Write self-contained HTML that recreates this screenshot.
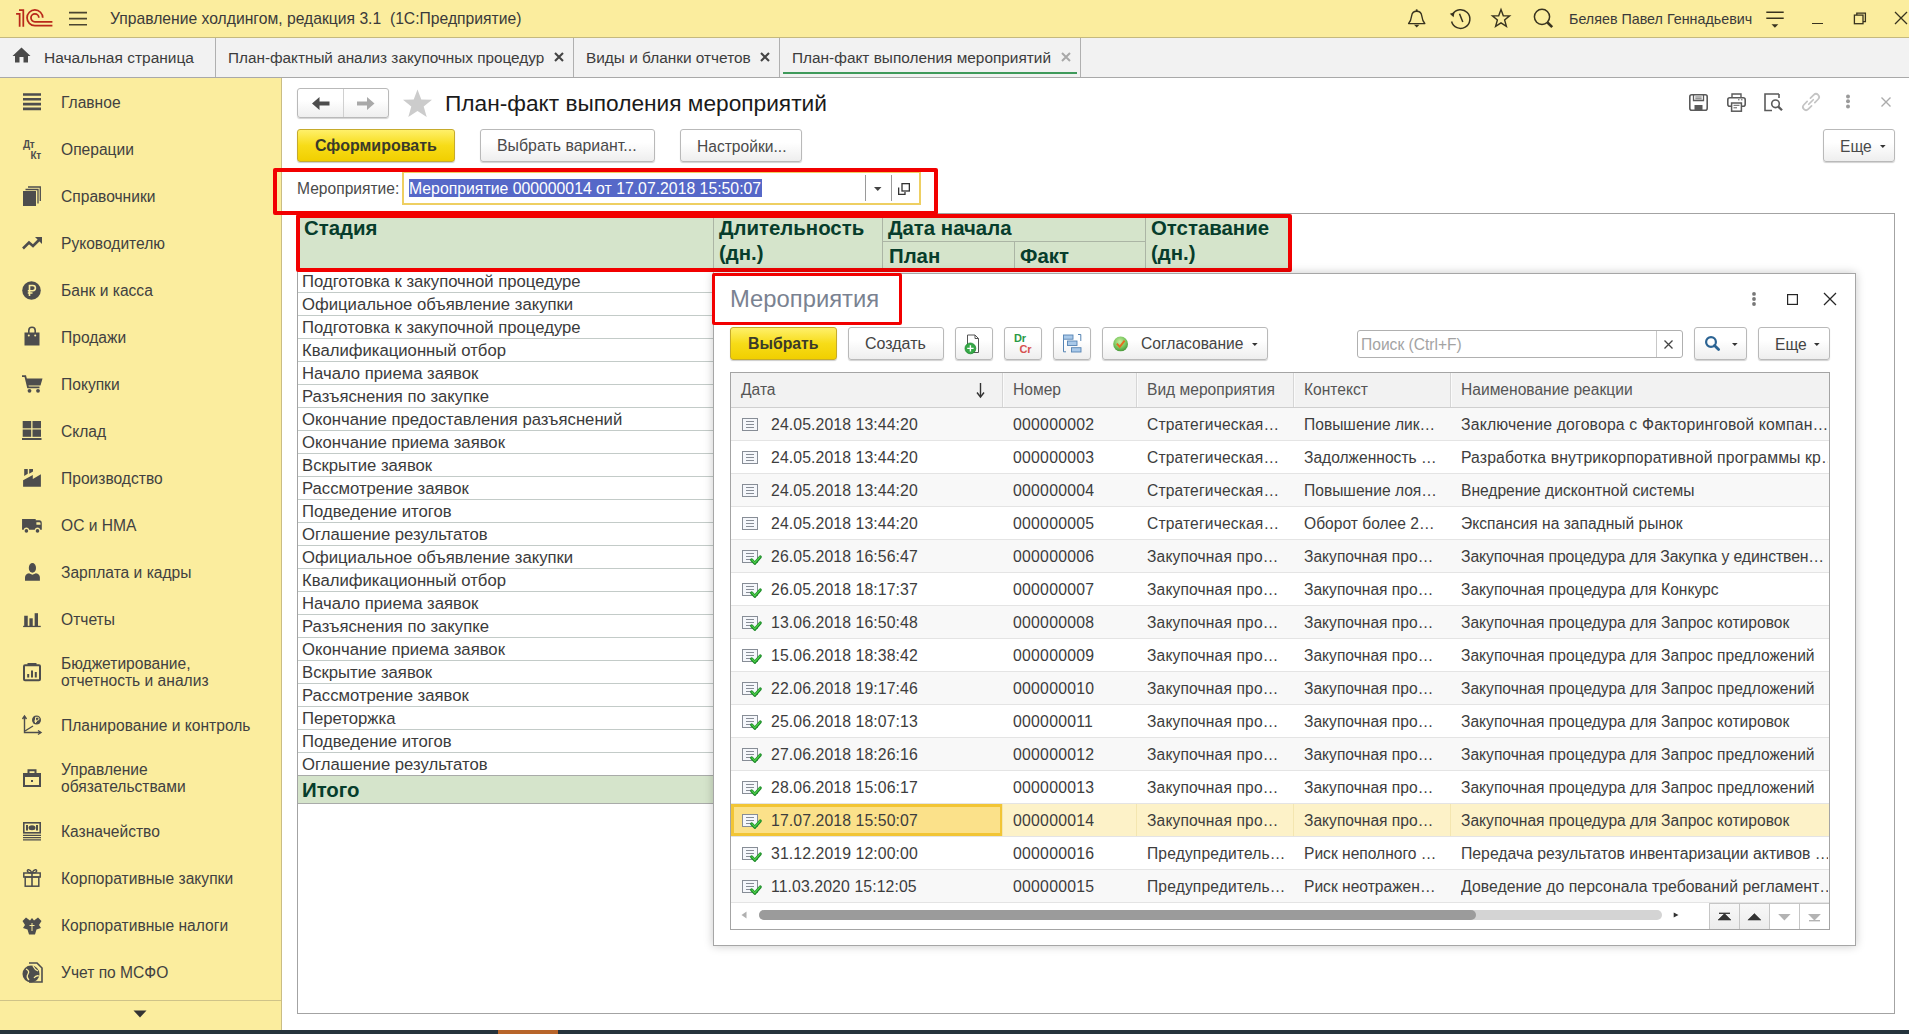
<!DOCTYPE html>
<html><head><meta charset="utf-8"><style>
*{box-sizing:border-box;margin:0;padding:0}
html,body{width:1909px;height:1034px;overflow:hidden;background:#fff;font-family:"Liberation Sans",sans-serif;color:#404040;font-size:15.6px}
.a{position:absolute}
.t{position:absolute;white-space:nowrap;line-height:20px;height:20px}
.sep{position:absolute;width:1px;background:#b4b4b4}
.btn{position:absolute;border:1px solid #b9b9b9;border-radius:3px;background:linear-gradient(#ffffff,#ffffff 40%,#eeeeee);box-shadow:0 1px 1px rgba(0,0,0,.18)}
.ybtn{position:absolute;border:1px solid #c6ab2c;border-radius:3px;background:linear-gradient(#fff06a,#f7dc18 50%,#f1cf00);box-shadow:0 1px 1px rgba(0,0,0,.2)}
svg{position:absolute;overflow:visible}
</style></head><body>
<div class="a" style="left:0px;top:0px;width:1909px;height:38px;background:#fbed9e;border-bottom:1px solid #c5b97e"></div>
<div class="a" style="left:0px;top:38px;width:1909px;height:40px;background:#f2f2f2;border-bottom:1px solid #a9a9a9"></div>
<div class="a" style="left:0px;top:78px;width:282px;height:952px;background:#fbed9e;border-right:1px solid #cabd84"></div>
<div class="a" style="left:0px;top:1000px;width:281px;height:1px;background:#cfc388"></div>
<div class="a" style="left:0px;top:1030px;width:1909px;height:4px;background:#25333c"></div>
<div class="a" style="left:498px;top:1030px;width:60px;height:4px;background:#b8652a"></div>
<svg style="left:12px;top:6px" width="44" height="24" viewBox="0 0 44 24">
<g fill="none" stroke="#b9281a" stroke-width="1.75">
<path d="M4.1 7.9 H7.65 V20.65"/>
<path d="M7 4.05 H11.3 V20.65"/>
<path d="M30.75 11.8 A7.85 7.85 0 1 0 22.9 19.65 H40.4"/>
<path d="M26.85 11.8 A3.95 3.95 0 1 0 22.9 15.75 H40.4"/>
</g>
</svg>
<svg style="left:69px;top:11px" width="19" height="15" viewBox="0 0 19 15"><path d="M0 1.6H18M0 7.6H18M0 13.8H18" stroke="#4a4530" stroke-width="1.6"/></svg>
<div class="t" style="left:110px;top:8.56px;font-size:15.7px;line-height:20px;height:20px;color:#3a3a3a;">Управление холдингом, редакция 3.1&nbsp; (1С:Предприятие)</div>
<svg style="left:1406px;top:7px" width="22" height="22" viewBox="0 0 22 22"><path d="M2.6 16.6 C4.8 14.3 5.2 12 5.6 9 C6 6 7.5 4.3 10.7 4.3 C13.9 4.3 15.4 6 15.8 9 C16.2 12 16.6 14.3 18.8 16.6 Z" fill="none" stroke="#38331f" stroke-width="1.4" stroke-linejoin="round"/><path d="M8 17.8 H13.4 L10.7 20.6Z" fill="#38331f"/><circle cx="10.7" cy="3.3" r="1.1" fill="#38331f"/></svg>
<svg style="left:1448px;top:7px" width="23" height="23" viewBox="0 0 23 23"><path d="M4.6 7.3 A9.3 9.3 0 1 1 3.6 14.5" fill="none" stroke="#38331f" stroke-width="1.5"/><path d="M1.8 6.8 L6.5 5.2 L5.6 10.2 Z" fill="#38331f"/><path d="M11.5 6.8 L14.8 15" fill="none" stroke="#38331f" stroke-width="1.5"/></svg>
<svg style="left:1491px;top:8px" width="20" height="20" viewBox="0 0 20 20"><path d="M10 1.5 L12.3 7.7 L18.6 7.9 L13.6 12 L15.4 18.4 L10 14.8 L4.6 18.4 L6.4 12 L1.4 7.9 L7.7 7.7 Z" fill="none" stroke="#38331f" stroke-width="1.4" stroke-linejoin="miter"/></svg>
<svg style="left:1533px;top:8px" width="21" height="21" viewBox="0 0 21 21"><circle cx="9" cy="8.8" r="7.6" fill="none" stroke="#38331f" stroke-width="1.5"/><path d="M14.5 14.5 L19.2 19.2" stroke="#38331f" stroke-width="2.6"/></svg>
<div class="t" style="left:1569px;top:9.05px;font-size:14.3px;line-height:20px;height:20px;color:#3a3a3a;">Беляев Павел Геннадьевич</div>
<svg style="left:1765px;top:10px" width="20" height="20" viewBox="0 0 20 20"><path d="M1.3 2.3H18.7M1.3 8.3H18.7" stroke="#38331f" stroke-width="1.5"/><path d="M6.5 14.2H13.3L9.9 17.8Z" fill="#38331f"/></svg>
<div class="a" style="left:1812px;top:22.6px;width:11px;height:1.5px;background:#38331f"></div>
<svg style="left:1853px;top:12px" width="14" height="13" viewBox="0 0 14 13"><rect x="1.4" y="3.1" width="8.6" height="8.6" fill="none" stroke="#38331f" stroke-width="1.3"/><path d="M3.8 3.1V1.2H12.4V9.6H10" fill="none" stroke="#38331f" stroke-width="1.3"/></svg>
<svg style="left:1894px;top:11px" width="14" height="14" viewBox="0 0 14 14"><path d="M1 1L13 13M13 1L1 13" stroke="#38331f" stroke-width="1.3"/></svg>
<svg style="left:12px;top:47px" width="19" height="16" viewBox="0 0 19 16"><path d="M9.5 0.5 L18.5 9 H16 V15.5 H11.5 V10 H7.5 V15.5 H3 V9 H0.5 Z" fill="#4a4a4a"/></svg>
<div class="t" style="left:44px;top:47.63px;font-size:15.5px;line-height:20px;height:20px;color:#3c3c3c;">Начальная страница</div>
<div class="a" style="left:215px;top:38px;width:1px;height:39px;background:#b0b0b0"></div>
<div class="t" style="left:228px;top:47.7px;font-size:15.3px;line-height:20px;height:20px;color:#3c3c3c;">План-фактный анализ закупочных процедур</div>
<svg style="left:554px;top:52px" width="10" height="10" viewBox="0 0 10 10"><path d="M1 1L9 9M9 1L1 9" stroke="#444" stroke-width="2.1"/></svg>
<div class="a" style="left:573px;top:38px;width:1px;height:39px;background:#b0b0b0"></div>
<div class="t" style="left:586px;top:47.66px;font-size:15.4px;line-height:20px;height:20px;color:#3c3c3c;">Виды и бланки отчетов</div>
<svg style="left:760px;top:52px" width="10" height="10" viewBox="0 0 10 10"><path d="M1 1L9 9M9 1L1 9" stroke="#444" stroke-width="2.1"/></svg>
<div class="a" style="left:779px;top:38px;width:1px;height:39px;background:#b0b0b0"></div>
<div class="t" style="left:792px;top:47.66px;font-size:15.4px;line-height:20px;height:20px;color:#3c3c3c;">План-факт выполения мероприятий</div>
<svg style="left:1061px;top:52px" width="10" height="10" viewBox="0 0 10 10"><path d="M1 1L9 9M9 1L1 9" stroke="#a8a8a8" stroke-width="2"/></svg>
<div class="a" style="left:1080px;top:38px;width:1px;height:39px;background:#b0b0b0"></div>
<div class="a" style="left:783px;top:72px;width:294px;height:2px;background:#3f9a5b"></div>
<div class="t" style="left:61px;top:92.59px;font-size:15.6px;line-height:20px;height:20px;color:#414141;">Главное</div>
<div class="t" style="left:61px;top:139.59px;font-size:15.6px;line-height:20px;height:20px;color:#414141;">Операции</div>
<div class="t" style="left:61px;top:186.59px;font-size:15.6px;line-height:20px;height:20px;color:#414141;">Справочники</div>
<div class="t" style="left:61px;top:233.59px;font-size:15.6px;line-height:20px;height:20px;color:#414141;">Руководителю</div>
<div class="t" style="left:61px;top:280.59px;font-size:15.6px;line-height:20px;height:20px;color:#414141;">Банк и касса</div>
<div class="t" style="left:61px;top:327.59px;font-size:15.6px;line-height:20px;height:20px;color:#414141;">Продажи</div>
<div class="t" style="left:61px;top:374.59px;font-size:15.6px;line-height:20px;height:20px;color:#414141;">Покупки</div>
<div class="t" style="left:61px;top:421.59px;font-size:15.6px;line-height:20px;height:20px;color:#414141;">Склад</div>
<div class="t" style="left:61px;top:468.59px;font-size:15.6px;line-height:20px;height:20px;color:#414141;">Производство</div>
<div class="t" style="left:61px;top:515.59px;font-size:15.6px;line-height:20px;height:20px;color:#414141;">ОС и НМА</div>
<div class="t" style="left:61px;top:562.59px;font-size:15.6px;line-height:20px;height:20px;color:#414141;">Зарплата и кадры</div>
<div class="t" style="left:61px;top:609.59px;font-size:15.6px;line-height:20px;height:20px;color:#414141;">Отчеты</div>
<div class="t" style="left:61px;top:653.59px;font-size:15.6px;line-height:20px;height:20px;color:#414141;">Бюджетирование,</div>
<div class="t" style="left:61px;top:670.59px;font-size:15.6px;line-height:20px;height:20px;color:#414141;">отчетность и анализ</div>
<div class="t" style="left:61px;top:715.59px;font-size:15.6px;line-height:20px;height:20px;color:#414141;">Планирование и контроль</div>
<div class="t" style="left:61px;top:759.59px;font-size:15.6px;line-height:20px;height:20px;color:#414141;">Управление</div>
<div class="t" style="left:61px;top:776.59px;font-size:15.6px;line-height:20px;height:20px;color:#414141;">обязательствами</div>
<div class="t" style="left:61px;top:821.59px;font-size:15.6px;line-height:20px;height:20px;color:#414141;">Казначейство</div>
<div class="t" style="left:61px;top:868.59px;font-size:15.6px;line-height:20px;height:20px;color:#414141;">Корпоративные закупки</div>
<div class="t" style="left:61px;top:915.59px;font-size:15.6px;line-height:20px;height:20px;color:#414141;">Корпоративные налоги</div>
<div class="t" style="left:61px;top:962.59px;font-size:15.6px;line-height:20px;height:20px;color:#414141;">Учет по МСФО</div>
<svg style="left:133px;top:1010px" width="14" height="8" viewBox="0 0 14 8"><path d="M0.5 0.5H13.5L7 7.5Z" fill="#333"/></svg>
<svg style="left:23px;top:93px" width="18" height="18" viewBox="0 0 18 18"><path d="M0 1.5H18M0 6.3H18M0 11.1H18M0 15.9H18" stroke="#4d4d4d" stroke-width="2.6"/></svg>
<div class="a" style="left:23px;top:140px;font-size:10px;font-weight:700;color:#4d4d4d;line-height:10px;letter-spacing:-0.3px">Дт</div>
<div class="a" style="left:30.5px;top:150.5px;font-size:10px;font-weight:700;color:#4d4d4d;line-height:10px;letter-spacing:-0.3px">Кт</div>
<svg style="left:23px;top:186px" width="18" height="20" viewBox="0 0 18 20"><rect x="0" y="5" width="13" height="15" fill="#4d4d4d"/><path d="M2.5 3.5H15V17.5" fill="none" stroke="#4d4d4d" stroke-width="1.3"/><path d="M5 1H17.3V15" fill="none" stroke="#4d4d4d" stroke-width="1.3"/></svg>
<svg style="left:22px;top:236px" width="21" height="14" viewBox="0 0 21 14"><path d="M1 12.5 L7 6.5 L11 10 L18 3" fill="none" stroke="#4d4d4d" stroke-width="2.6" stroke-linejoin="miter"/><path d="M13 1 H20 V8 Z" fill="#4d4d4d"/></svg>
<svg style="left:22px;top:281px" width="19" height="19" viewBox="0 0 19 19"><circle cx="9.5" cy="9.5" r="9.3" fill="#4d4d4d"/><path d="M7.5 15V4.5H10.8A2.6 2.6 0 0 1 10.8 9.7H5.8M5.8 12H10.5" fill="none" stroke="#fbed9e" stroke-width="1.6"/></svg>
<svg style="left:24px;top:327px" width="16" height="19" viewBox="0 0 16 19"><path d="M0.5 5.5H15.5V18.5H0.5Z" fill="#4d4d4d"/><path d="M4.8 8V3.5A3.2 3.2 0 0 1 11.2 3.5V8" fill="none" stroke="#4d4d4d" stroke-width="1.6"/><circle cx="4.8" cy="8.5" r="1" fill="#fbed9e"/><circle cx="11.2" cy="8.5" r="1" fill="#fbed9e"/></svg>
<svg style="left:22px;top:375px" width="21" height="18" viewBox="0 0 21 18"><path d="M0 1.2H3.3L6 12.3H17.5" fill="none" stroke="#4d4d4d" stroke-width="1.8"/><path d="M4.2 3.5H20.5L18.5 10.5H5.8Z" fill="#4d4d4d"/><circle cx="7.5" cy="15.8" r="1.9" fill="#4d4d4d"/><circle cx="16" cy="15.8" r="1.9" fill="#4d4d4d"/></svg>
<svg style="left:22px;top:421px" width="20" height="19" viewBox="0 0 20 19"><rect x="0.7" y="0" width="8.5" height="7.3" fill="#4d4d4d"/><rect x="10.5" y="0" width="8.5" height="7.3" fill="#4d4d4d"/><rect x="0.7" y="8.5" width="8.5" height="7.3" fill="#4d4d4d"/><rect x="10.5" y="8.5" width="8.5" height="7.3" fill="#4d4d4d"/><rect x="0" y="17" width="19.5" height="2" fill="#4d4d4d"/></svg>
<svg style="left:18px;top:464px" width="28" height="28" viewBox="0 0 28 28"><path d="M5.1 22.7 V16.2 L14.8 11 V15 L22.9 10.3 V22.7 Z" fill="#4d4d4d"/><path d="M6.2 5 H9.75 V9.8 L6.2 11.9 Z" fill="#4d4d4d"/><path d="M11.2 5 H15 V7.6 L11.2 9.7 Z" fill="#4d4d4d"/></svg>
<svg style="left:18px;top:511px" width="28" height="28" viewBox="0 0 28 28"><path d="M4.06 8.1 H17.7 V9.3 H21.3 Q23.8 9.3 23.8 12.5 V18.7 H22.3 A2.9 2.9 0 0 0 16.7 18.7 H11.2 A2.9 2.9 0 0 0 5.6 18.7 H4.06 Z" fill="#4d4d4d"/><path d="M18.4 11.2 H21.2 Q22.5 11.2 22.5 12.5 V13.8 H18.4 Z" fill="#fbed9e"/><circle cx="8.4" cy="19.9" r="1.8" fill="#4d4d4d"/><circle cx="19.5" cy="19.9" r="1.8" fill="#4d4d4d"/></svg>
<svg style="left:18px;top:558px" width="28" height="28" viewBox="0 0 28 28"><ellipse cx="14.4" cy="9.9" rx="3.6" ry="4.9" fill="#4d4d4d"/><path d="M7 22.75 V19.5 Q7 16 11 15.3 L14.4 16.8 L17.9 15.3 Q21.9 16 21.9 19.5 V22.75 Z" fill="#4d4d4d"/></svg>
<svg style="left:18px;top:606px" width="28" height="28" viewBox="0 0 28 28"><rect x="6.2" y="9.75" width="3.55" height="10.6" fill="#4d4d4d"/><rect x="11.4" y="12.3" width="3.35" height="8" fill="#4d4d4d"/><rect x="16.65" y="7.2" width="3.35" height="13.1" fill="#4d4d4d"/><rect x="5.1" y="19.8" width="17.65" height="1.3" fill="#4d4d4d"/></svg>
<svg style="left:23px;top:663px" width="18" height="18" viewBox="0 0 18 18"><rect x="1" y="2.2" width="16" height="15" rx="1" fill="none" stroke="#4d4d4d" stroke-width="2"/><rect x="4.5" y="0" width="9" height="3" fill="#4d4d4d"/><rect x="4.2" y="11" width="2" height="3.5" fill="#4d4d4d"/><rect x="8" y="7.5" width="2" height="7" fill="#4d4d4d"/><rect x="11.8" y="9" width="2" height="5.5" fill="#4d4d4d"/></svg>
<svg style="left:22px;top:715px" width="20" height="20" viewBox="0 0 20 20"><path d="M2.5 1.5V17.5H18.5" fill="none" stroke="#4d4d4d" stroke-width="1.4"/><path d="M0.5 4L2.5 1L4.5 4M16 15.5L19 17.5L16 19.5" fill="none" stroke="#4d4d4d" stroke-width="1.4"/><path d="M3 16L11 11" stroke="#4d4d4d" stroke-width="1.4"/><circle cx="14.5" cy="5" r="4.5" fill="#4d4d4d"/><path d="M13.5 8V2.3H15.5A1.5 1.5 0 0 1 15.5 5.3H12.5M12.5 6.6H15" fill="none" stroke="#fbed9e" stroke-width="1"/></svg>
<svg style="left:23px;top:769px" width="18" height="18" viewBox="0 0 18 18"><rect x="1" y="5" width="16" height="12" fill="none" stroke="#4d4d4d" stroke-width="2"/><path d="M5.5 5V1.3H12.5V5" fill="none" stroke="#4d4d4d" stroke-width="2"/><rect x="1" y="5" width="16" height="3" fill="#4d4d4d"/><rect x="8" y="11" width="2" height="2" fill="#4d4d4d"/></svg>
<svg style="left:23px;top:822px" width="18" height="18" viewBox="0 0 18 18"><rect x="0.8" y="0.8" width="16.4" height="10" fill="none" stroke="#4d4d4d" stroke-width="1.6"/><ellipse cx="9" cy="5.8" rx="3.5" ry="2.5" fill="#4d4d4d"/><rect x="3" y="3" width="2" height="5.5" fill="#4d4d4d"/><rect x="13" y="3" width="2" height="5.5" fill="#4d4d4d"/><path d="M0 13.3H18M0 15.6H18M0 17.8H18" stroke="#4d4d4d" stroke-width="1.2"/></svg>
<svg style="left:23px;top:868px" width="18" height="19" viewBox="0 0 18 19"><rect x="0.8" y="5" width="16.4" height="4" fill="none" stroke="#4d4d4d" stroke-width="1.5"/><rect x="2.2" y="9" width="13.6" height="9.2" fill="none" stroke="#4d4d4d" stroke-width="1.5"/><path d="M9 5V18.5" stroke="#4d4d4d" stroke-width="1.6"/><path d="M9 5C7 1 3.5 1 4.5 3.5 C5 5 8 5 9 5 C10 5 13 5 13.5 3.5 C14.5 1 11 1 9 5" fill="none" stroke="#4d4d4d" stroke-width="1.4"/></svg>
<svg style="left:22px;top:916px" width="20" height="19" viewBox="0 0 20 19"><path d="M10 2 L12 4.5 L16 1.5 L19.5 5 L17 9 L19 12 L14.5 13.5 L13 18.5 H7 L5.5 13.5 L1 12 L3 9 L0.5 5 L4 1.5 L8 4.5 Z" fill="#4d4d4d"/><path d="M10 7V15M7.5 9.5H12.5" stroke="#fbed9e" stroke-width="1"/></svg>
<svg style="left:22px;top:962px" width="21" height="21" viewBox="0 0 21 21"><path d="M7 1H15L20 6V20H7" fill="none" stroke="#4d4d4d" stroke-width="1.6"/><circle cx="9" cy="12" r="8.5" fill="#4d4d4d"/><path d="M4 7 Q8 9 6 12 Q4 15 7 18 M11 4 Q13 8 16 9 M12 16 Q14 13 17 14" fill="none" stroke="#fbed9e" stroke-width="1.3"/></svg>
<div class="btn" style="left:297px;top:88px;width:92px;height:30px"></div>
<div class="a" style="left:343px;top:89px;width:1px;height:28px;background:#d0d0d0"></div>
<svg style="left:312px;top:97px" width="18" height="13" viewBox="0 0 18 13"><path d="M0 6.5 L7.5 0 V4.5 H17.5 V8.5 H7.5 V13 Z" fill="#4d4d4d"/></svg>
<svg style="left:357px;top:97px" width="18" height="13" viewBox="0 0 18 13"><path d="M17.5 6.5 L10 0 V4.5 H0 V8.5 H10 V13 Z" fill="#a9a9a9"/></svg>
<svg style="left:402px;top:89px" width="31" height="29" viewBox="0 0 31 29"><path d="M15.5 0.5 L19.3 10.5 L30 10.8 L21.7 17.5 L24.7 28 L15.5 22 L6.3 28 L9.3 17.5 L1 10.8 L11.7 10.5 Z" fill="#cccccc"/></svg>
<div class="t" style="left:445px;top:88.13px;font-size:22.7px;line-height:30px;height:30px;color:#1a1a1a;">План-факт выполения мероприятий</div>
<svg style="left:1689px;top:94px" width="19" height="17" viewBox="0 0 19 17"><rect x="0.8" y="0.8" width="17.4" height="15.4" rx="2" fill="none" stroke="#5a5a5a" stroke-width="1.6"/><path d="M4.5 1V6.5H14.5V1" fill="none" stroke="#5a5a5a" stroke-width="1.3"/><path d="M6.3 3H12.7M6.3 4.8H12.7" stroke="#5a5a5a" stroke-width="0.9"/><rect x="5.5" y="11" width="8" height="5" fill="#5a5a5a"/></svg>
<svg style="left:1727px;top:93px" width="19" height="19" viewBox="0 0 19 19"><path d="M5 4.5V1H14V4.5" fill="none" stroke="#5a5a5a" stroke-width="1.4"/><rect x="0.8" y="4.7" width="17.4" height="8.6" rx="2" fill="none" stroke="#5a5a5a" stroke-width="1.6"/><rect x="4.6" y="10" width="9.8" height="8.2" fill="#fff" stroke="#5a5a5a" stroke-width="1.5"/><path d="M6.5 12.3H12.5M6.5 14.8H10" stroke="#5a5a5a" stroke-width="1"/><path d="M11 6.8H12.5M14 6.8H15.5" stroke="#5a5a5a" stroke-width="1"/></svg>
<svg style="left:1764px;top:93px" width="19" height="19" viewBox="0 0 19 19"><path d="M15 1H1V17.5H8" fill="none" stroke="#5a5a5a" stroke-width="1.6"/><path d="M15 1V5" stroke="#5a5a5a" stroke-width="1.6"/><circle cx="11.5" cy="10.8" r="3.8" fill="none" stroke="#5a5a5a" stroke-width="1.6"/><path d="M14.3 13.6L18 17.3" stroke="#5a5a5a" stroke-width="2.3"/></svg>
<svg style="left:1798px;top:89px" width="26" height="26" viewBox="0 0 26 26"><g transform="rotate(-45 13 13)" fill="none" stroke="#c4c4c4" stroke-width="1.7" stroke-linecap="round"><path d="M10.7 9.9 H6 A3.1 3.1 0 0 0 6 16.1 H10.7"/><path d="M15.3 9.9 H20 A3.1 3.1 0 0 1 20 16.1 H15.3"/><path d="M9.8 13 H16.2"/></g></svg>
<svg style="left:1845px;top:94px" width="6" height="17" viewBox="0 0 6 17"><circle cx="3" cy="2.5" r="2" fill="#9a9a9a"/><circle cx="3" cy="7.3" r="2" fill="#9a9a9a"/><circle cx="3" cy="12.4" r="2" fill="#9a9a9a"/></svg>
<svg style="left:1881px;top:97px" width="10" height="10" viewBox="0 0 10 10"><path d="M0.5 0.5L9.5 9.5M9.5 0.5L0.5 9.5" stroke="#ababab" stroke-width="1.4"/></svg>
<div class="ybtn" style="left:297px;top:129px;width:158px;height:33px"></div>
<div class="t" style="left:315px;top:136.46px;font-size:16px;line-height:20px;height:20px;color:#3a3a2a;font-weight:700;">Сформировать</div>
<div class="btn" style="left:480px;top:129px;width:175px;height:33px"></div>
<div class="t" style="left:497px;top:136.49px;font-size:15.9px;line-height:20px;height:20px;color:#4a4a4a;">Выбрать вариант...</div>
<div class="btn" style="left:680px;top:129px;width:122px;height:33px"></div>
<div class="t" style="left:697px;top:136.59px;font-size:15.6px;line-height:20px;height:20px;color:#4a4a4a;">Настройки...</div>
<div class="btn" style="left:1823px;top:129px;width:72px;height:33px"></div>
<div class="t" style="left:1840px;top:136.59px;font-size:15.6px;line-height:20px;height:20px;color:#4a4a4a;">Еще</div>
<svg style="left:1880px;top:145px" width="6" height="3" viewBox="0 0 6 3"><path d="M0 0H5.6L2.8 3Z" fill="#333"/></svg>
<div class="t" style="left:297px;top:178.59px;font-size:15.6px;line-height:20px;height:20px;color:#4a4a4a;">Мероприятие:</div>
<div class="a" style="left:402px;top:171px;width:519px;height:34px;border:2px solid #eecf62;background:#fff"></div>
<div class="a" style="left:409px;top:179px;width:353px;height:18px;background:#5668c8"></div>
<div class="t" style="left:409px;top:178.53px;font-size:15.8px;line-height:20px;height:20px;color:#ffffff;">Мероприятие 000000014 от 17.07.2018 15:50:07</div>
<div class="a" style="left:865px;top:175px;width:1px;height:26px;background:#9a9a9a"></div>
<div class="a" style="left:891px;top:175px;width:1px;height:26px;background:#9a9a9a"></div>
<svg style="left:874px;top:187px" width="8" height="4" viewBox="0 0 8 4"><path d="M0 0H7.5L3.75 4Z" fill="#444"/></svg>
<svg style="left:898px;top:183px" width="12" height="12" viewBox="0 0 12 12"><path d="M0.65 4.5V11.35H7V9" fill="none" stroke="#333" stroke-width="1.3"/><rect x="4" y="0.65" width="7.35" height="7.35" fill="none" stroke="#333" stroke-width="1.3"/></svg>
<div class="a" style="left:297px;top:213px;width:1598px;height:801px;border:1px solid #a3a3a3"></div>
<div class="a" style="left:298px;top:214px;width:990px;height:55px;background:#d5e4cb"></div>
<div class="a" style="left:713px;top:214px;width:1px;height:55px;background:#abb5a5"></div>
<div class="a" style="left:882px;top:214px;width:1px;height:55px;background:#abb5a5"></div>
<div class="a" style="left:1145px;top:214px;width:1px;height:55px;background:#abb5a5"></div>
<div class="a" style="left:882px;top:241px;width:263px;height:1px;background:#abb5a5"></div>
<div class="a" style="left:1014px;top:241px;width:1px;height:28px;background:#abb5a5"></div>
<div class="a" style="left:1288px;top:214px;width:1px;height:55px;background:#abb5a5"></div>
<div class="t" style="left:304px;top:215.93px;font-size:20.4px;line-height:24px;height:24px;color:#073d2c;font-weight:700;">Стадия</div>
<div class="t" style="left:719px;top:215.93px;font-size:20.4px;line-height:24px;height:24px;color:#073d2c;font-weight:700;">Длительность</div>
<div class="t" style="left:719px;top:240.93px;font-size:20.4px;line-height:24px;height:24px;color:#073d2c;font-weight:700;">(дн.)</div>
<div class="t" style="left:888px;top:215.93px;font-size:20.4px;line-height:24px;height:24px;color:#073d2c;font-weight:700;">Дата начала</div>
<div class="t" style="left:889px;top:243.93px;font-size:20.4px;line-height:24px;height:24px;color:#073d2c;font-weight:700;">План</div>
<div class="t" style="left:1020px;top:243.93px;font-size:20.4px;line-height:24px;height:24px;color:#073d2c;font-weight:700;">Факт</div>
<div class="t" style="left:1151px;top:215.93px;font-size:20.4px;line-height:24px;height:24px;color:#073d2c;font-weight:700;">Отставание</div>
<div class="t" style="left:1151px;top:240.93px;font-size:20.4px;line-height:24px;height:24px;color:#073d2c;font-weight:700;">(дн.)</div>
<div class="t" style="left:302px;top:272.21px;font-size:16.7px;line-height:20px;height:20px;color:#3b3b3b;">Подготовка к закупочной процедуре</div>
<div class="a" style="left:298px;top:292px;width:420px;height:1px;background:#c3cbc8"></div>
<div class="t" style="left:302px;top:295.21px;font-size:16.7px;line-height:20px;height:20px;color:#3b3b3b;">Официальное объявление закупки</div>
<div class="a" style="left:298px;top:315px;width:420px;height:1px;background:#c3cbc8"></div>
<div class="t" style="left:302px;top:318.21px;font-size:16.7px;line-height:20px;height:20px;color:#3b3b3b;">Подготовка к закупочной процедуре</div>
<div class="a" style="left:298px;top:338px;width:420px;height:1px;background:#c3cbc8"></div>
<div class="t" style="left:302px;top:341.21px;font-size:16.7px;line-height:20px;height:20px;color:#3b3b3b;">Квалификационный отбор</div>
<div class="a" style="left:298px;top:361px;width:420px;height:1px;background:#c3cbc8"></div>
<div class="t" style="left:302px;top:364.21px;font-size:16.7px;line-height:20px;height:20px;color:#3b3b3b;">Начало приема заявок</div>
<div class="a" style="left:298px;top:384px;width:420px;height:1px;background:#c3cbc8"></div>
<div class="t" style="left:302px;top:387.21px;font-size:16.7px;line-height:20px;height:20px;color:#3b3b3b;">Разъяснения по закупке</div>
<div class="a" style="left:298px;top:407px;width:420px;height:1px;background:#c3cbc8"></div>
<div class="t" style="left:302px;top:410.21px;font-size:16.7px;line-height:20px;height:20px;color:#3b3b3b;">Окончание предоставления разъяснений</div>
<div class="a" style="left:298px;top:430px;width:420px;height:1px;background:#c3cbc8"></div>
<div class="t" style="left:302px;top:433.21px;font-size:16.7px;line-height:20px;height:20px;color:#3b3b3b;">Окончание приема заявок</div>
<div class="a" style="left:298px;top:453px;width:420px;height:1px;background:#c3cbc8"></div>
<div class="t" style="left:302px;top:456.21px;font-size:16.7px;line-height:20px;height:20px;color:#3b3b3b;">Вскрытие заявок</div>
<div class="a" style="left:298px;top:476px;width:420px;height:1px;background:#c3cbc8"></div>
<div class="t" style="left:302px;top:479.21px;font-size:16.7px;line-height:20px;height:20px;color:#3b3b3b;">Рассмотрение заявок</div>
<div class="a" style="left:298px;top:499px;width:420px;height:1px;background:#c3cbc8"></div>
<div class="t" style="left:302px;top:502.21px;font-size:16.7px;line-height:20px;height:20px;color:#3b3b3b;">Подведение итогов</div>
<div class="a" style="left:298px;top:522px;width:420px;height:1px;background:#c3cbc8"></div>
<div class="t" style="left:302px;top:525.21px;font-size:16.7px;line-height:20px;height:20px;color:#3b3b3b;">Оглашение результатов</div>
<div class="a" style="left:298px;top:545px;width:420px;height:1px;background:#c3cbc8"></div>
<div class="t" style="left:302px;top:548.21px;font-size:16.7px;line-height:20px;height:20px;color:#3b3b3b;">Официальное объявление закупки</div>
<div class="a" style="left:298px;top:568px;width:420px;height:1px;background:#c3cbc8"></div>
<div class="t" style="left:302px;top:571.21px;font-size:16.7px;line-height:20px;height:20px;color:#3b3b3b;">Квалификационный отбор</div>
<div class="a" style="left:298px;top:591px;width:420px;height:1px;background:#c3cbc8"></div>
<div class="t" style="left:302px;top:594.21px;font-size:16.7px;line-height:20px;height:20px;color:#3b3b3b;">Начало приема заявок</div>
<div class="a" style="left:298px;top:614px;width:420px;height:1px;background:#c3cbc8"></div>
<div class="t" style="left:302px;top:617.21px;font-size:16.7px;line-height:20px;height:20px;color:#3b3b3b;">Разъяснения по закупке</div>
<div class="a" style="left:298px;top:637px;width:420px;height:1px;background:#c3cbc8"></div>
<div class="t" style="left:302px;top:640.21px;font-size:16.7px;line-height:20px;height:20px;color:#3b3b3b;">Окончание приема заявок</div>
<div class="a" style="left:298px;top:660px;width:420px;height:1px;background:#c3cbc8"></div>
<div class="t" style="left:302px;top:663.21px;font-size:16.7px;line-height:20px;height:20px;color:#3b3b3b;">Вскрытие заявок</div>
<div class="a" style="left:298px;top:683px;width:420px;height:1px;background:#c3cbc8"></div>
<div class="t" style="left:302px;top:686.21px;font-size:16.7px;line-height:20px;height:20px;color:#3b3b3b;">Рассмотрение заявок</div>
<div class="a" style="left:298px;top:706px;width:420px;height:1px;background:#c3cbc8"></div>
<div class="t" style="left:302px;top:709.21px;font-size:16.7px;line-height:20px;height:20px;color:#3b3b3b;">Переторжка</div>
<div class="a" style="left:298px;top:729px;width:420px;height:1px;background:#c3cbc8"></div>
<div class="t" style="left:302px;top:732.21px;font-size:16.7px;line-height:20px;height:20px;color:#3b3b3b;">Подведение итогов</div>
<div class="a" style="left:298px;top:752px;width:420px;height:1px;background:#c3cbc8"></div>
<div class="t" style="left:302px;top:755.21px;font-size:16.7px;line-height:20px;height:20px;color:#3b3b3b;">Оглашение результатов</div>
<div class="a" style="left:713px;top:269px;width:1px;height:506px;background:#c3cbc8"></div>
<div class="a" style="left:298px;top:775px;width:420px;height:1px;background:#a9aba9"></div>
<div class="a" style="left:298px;top:776px;width:420px;height:27px;background:#d5e4cb"></div>
<div class="a" style="left:298px;top:803px;width:420px;height:1px;background:#a9aba9"></div>
<div class="t" style="left:302px;top:777.93px;font-size:20.4px;line-height:24px;height:24px;color:#073d2c;font-weight:700;">Итого</div>
<div class="a" style="left:273px;top:168px;width:665px;height:47px;border:4px solid #f20000;border-radius:2px"></div>
<div class="a" style="left:296px;top:214px;width:996px;height:57.5px;border:4px solid #f20000;border-radius:2px"></div>
<div class="a" style="left:713px;top:273px;width:1143px;height:673px;background:#fff;border:1px solid #a6a6a6;box-shadow:0 0 9px rgba(0,0,0,.22)"></div>
<div class="a" style="left:712px;top:273px;width:190px;height:52px;border:3.6px solid #f20000;border-radius:2px"></div>
<div class="t" style="left:730px;top:283.75px;font-size:23.8px;line-height:30px;height:30px;color:#7a8291;">Мероприятия</div>
<svg style="left:1751px;top:292px" width="6" height="14" viewBox="0 0 6 14"><circle cx="3" cy="1.9" r="1.9" fill="#777"/><circle cx="3" cy="7" r="1.9" fill="#777"/><circle cx="3" cy="12" r="1.9" fill="#777"/></svg>
<svg style="left:1787px;top:294px" width="11" height="11" viewBox="0 0 11 11"><rect x="0.6" y="0.6" width="9.8" height="9.8" fill="none" stroke="#262626" stroke-width="1.2"/></svg>
<svg style="left:1823px;top:292px" width="14" height="14" viewBox="0 0 14 14"><path d="M1 1L13 13M13 1L1 13" stroke="#262626" stroke-width="1.25"/></svg>
<div class="ybtn" style="left:730px;top:327px;width:107px;height:33px"></div>
<div class="t" style="left:748px;top:333.53px;font-size:15.8px;line-height:20px;height:20px;color:#3a3a2a;font-weight:700;">Выбрать</div>
<div class="btn" style="left:848px;top:327px;width:96px;height:33px"></div>
<div class="t" style="left:865px;top:334.46px;font-size:16px;line-height:20px;height:20px;color:#444;">Создать</div>
<div class="btn" style="left:955px;top:327px;width:38px;height:33px"></div>
<svg style="left:964px;top:333px" width="20" height="22" viewBox="0 0 20 22"><path d="M3.5 2H11L14.5 5.5V19.5H3.5Z" fill="#fff" stroke="#555" stroke-width="1"/><path d="M11 2V5.5H14.5" fill="none" stroke="#555" stroke-width="1"/><circle cx="6.4" cy="15.4" r="5.4" fill="#36a847" stroke="#1e8a30" stroke-width="0.8"/><path d="M6.4 12.2V18.6M3.2 15.4H9.6" stroke="#fff" stroke-width="1.4"/></svg>
<div class="btn" style="left:1004px;top:327px;width:38px;height:33px"></div>
<div class="a" style="left:1014px;top:333px;font-size:11px;font-weight:700;color:#2a9a45;line-height:11px;letter-spacing:-0.2px">Dr</div>
<div class="a" style="left:1019.5px;top:343.5px;font-size:11px;font-weight:700;color:#d65050;line-height:11px;letter-spacing:-0.2px">Cr</div>
<div class="btn" style="left:1053px;top:327px;width:38px;height:33px"></div>
<svg style="left:1062px;top:333px" width="20" height="21" viewBox="0 0 20 21"><rect x="1.5" y="2" width="9.5" height="4.2" fill="#a9c9e9" stroke="#5583b3" stroke-width="0.9"/><rect x="5.5" y="8" width="9.5" height="4.5" fill="#a9c9e9" stroke="#5583b3" stroke-width="0.9"/><rect x="9.5" y="14.7" width="9.5" height="4.3" fill="#a9c9e9" stroke="#5583b3" stroke-width="0.9"/><path d="M1.5 6.2V18.8H4M16 1.5H18.8V8" fill="none" stroke="#5583b3" stroke-width="1"/></svg>
<div class="btn" style="left:1102px;top:327px;width:166px;height:33px"></div>
<svg style="left:1112px;top:335px" width="18" height="18" viewBox="0 0 18 18"><defs><radialGradient id="gc" cx="0.45" cy="0.35" r="0.65"><stop offset="0" stop-color="#c8efa0"/><stop offset="0.6" stop-color="#7cc860"/><stop offset="1" stop-color="#4a9a3a"/></radialGradient></defs><circle cx="8.6" cy="8.9" r="7.4" fill="url(#gc)"/><path d="M4.8 8.6L7.8 11.8L12.6 5.6" fill="none" stroke="#e86a20" stroke-width="1.9"/></svg>
<div class="t" style="left:1141px;top:333.59px;font-size:15.6px;line-height:20px;height:20px;color:#444;">Согласование</div>
<svg style="left:1252px;top:343px" width="6" height="3" viewBox="0 0 6 3"><path d="M0 0H5.6L2.8 3Z" fill="#333"/></svg>
<div class="a" style="left:1357px;top:330px;width:326px;height:28px;border:1px solid #b0b0b0;border-radius:3px;background:#fff"></div>
<div class="a" style="left:1656px;top:331px;width:1px;height:26px;background:#c8c8c8"></div>
<div class="t" style="left:1361px;top:334.59px;font-size:15.6px;line-height:20px;height:20px;color:#a3a3a3;">Поиск (Ctrl+F)</div>
<svg style="left:1664px;top:340px" width="9" height="9" viewBox="0 0 9 9"><path d="M0.5 0.5L8.5 8.5M8.5 0.5L0.5 8.5" stroke="#444" stroke-width="1.3"/></svg>
<div class="btn" style="left:1694px;top:327px;width:53px;height:33px"></div>
<svg style="left:1704px;top:335px" width="18" height="18" viewBox="0 0 18 18"><circle cx="7" cy="7" r="4.9" fill="none" stroke="#2b6393" stroke-width="2.2"/><path d="M10.5 10.5L14.6 14.6" stroke="#2b6393" stroke-width="2.8" stroke-linecap="round"/></svg>
<svg style="left:1732px;top:343px" width="6" height="3" viewBox="0 0 6 3"><path d="M0 0H5.6L2.8 3Z" fill="#333"/></svg>
<div class="btn" style="left:1758px;top:327px;width:72px;height:33px"></div>
<div class="t" style="left:1775px;top:334.59px;font-size:15.6px;line-height:20px;height:20px;color:#444;">Еще</div>
<svg style="left:1814px;top:343px" width="6" height="3" viewBox="0 0 6 3"><path d="M0 0H5.6L2.8 3Z" fill="#333"/></svg>
<div class="a" style="left:730px;top:372px;width:1100px;height:558px;border:1px solid #a4a4a4;background:#fff"></div>
<div class="a" style="left:731px;top:373px;width:1098px;height:34px;background:#f2f2f2"></div>
<div class="a" style="left:731px;top:407px;width:1098px;height:1px;background:#cfcfcf"></div>
<div class="a" style="left:1002px;top:373px;width:1px;height:34px;background:#d6d6d6"></div>
<div class="a" style="left:1003px;top:373px;width:1px;height:34px;background:#fafafa"></div>
<div class="a" style="left:1136px;top:373px;width:1px;height:34px;background:#d6d6d6"></div>
<div class="a" style="left:1137px;top:373px;width:1px;height:34px;background:#fafafa"></div>
<div class="a" style="left:1293px;top:373px;width:1px;height:34px;background:#d6d6d6"></div>
<div class="a" style="left:1294px;top:373px;width:1px;height:34px;background:#fafafa"></div>
<div class="a" style="left:1450px;top:373px;width:1px;height:34px;background:#d6d6d6"></div>
<div class="a" style="left:1451px;top:373px;width:1px;height:34px;background:#fafafa"></div>
<div class="t" style="left:741px;top:379.59px;font-size:15.6px;line-height:20px;height:20px;color:#555;">Дата</div>
<svg style="left:976px;top:383px" width="9" height="15" viewBox="0 0 9 15"><path d="M4.5 0V13" stroke="#333" stroke-width="1.4"/><path d="M1 9.5L4.5 14L8 9.5" fill="none" stroke="#333" stroke-width="1.4"/></svg>
<div class="t" style="left:1013px;top:379.59px;font-size:15.6px;line-height:20px;height:20px;color:#555;">Номер</div>
<div class="t" style="left:1147px;top:379.59px;font-size:15.6px;line-height:20px;height:20px;color:#555;">Вид мероприятия</div>
<div class="t" style="left:1304px;top:379.59px;font-size:15.6px;line-height:20px;height:20px;color:#555;">Контекст</div>
<div class="t" style="left:1461px;top:379.59px;font-size:15.6px;line-height:20px;height:20px;color:#555;">Наименование реакции</div>
<div class="a" style="left:731px;top:408px;width:1098px;height:32px;background:#f8f8f8"></div>
<div class="a" style="left:731px;top:440px;width:1098px;height:1px;background:#e4e4e4"></div>
<svg style="left:742px;top:418px" width="20" height="14" viewBox="0 0 20 14"><rect x="0.5" y="0.5" width="15" height="12" fill="#f5f7fb" stroke="#878d96" stroke-width="1"/><path d="M4 3.5H12M4 6.5H12M4 9.5H12" stroke="#878d96" stroke-width="1"/></svg>
<div class="t" style="left:771px;top:414.53px;font-size:15.8px;line-height:20px;height:20px;color:#3d3d3d;letter-spacing:0.1px;">24.05.2018 13:44:20</div>
<div class="t" style="left:1013px;top:414.53px;font-size:15.8px;line-height:20px;height:20px;color:#3d3d3d;letter-spacing:0.25px;">000000002</div>
<div class="t" style="left:1147px;top:414.59px;font-size:15.6px;line-height:20px;height:20px;color:#3d3d3d;letter-spacing:0.15px;">Стратегическая…</div>
<div class="t" style="left:1304px;top:414.59px;font-size:15.6px;line-height:20px;height:20px;color:#3d3d3d;">Повышение лик…</div>
<div class="t" style="left:1461px;top:414.53px;font-size:15.8px;line-height:20px;height:20px;color:#3d3d3d;letter-spacing:0.167px;width:367px;overflow:hidden;">Заключение договора с Факторинговой компан…</div>
<div class="a" style="left:731px;top:473px;width:1098px;height:1px;background:#e4e4e4"></div>
<svg style="left:742px;top:451px" width="20" height="14" viewBox="0 0 20 14"><rect x="0.5" y="0.5" width="15" height="12" fill="#f5f7fb" stroke="#878d96" stroke-width="1"/><path d="M4 3.5H12M4 6.5H12M4 9.5H12" stroke="#878d96" stroke-width="1"/></svg>
<div class="t" style="left:771px;top:447.53px;font-size:15.8px;line-height:20px;height:20px;color:#3d3d3d;letter-spacing:0.1px;">24.05.2018 13:44:20</div>
<div class="t" style="left:1013px;top:447.53px;font-size:15.8px;line-height:20px;height:20px;color:#3d3d3d;letter-spacing:0.25px;">000000003</div>
<div class="t" style="left:1147px;top:447.59px;font-size:15.6px;line-height:20px;height:20px;color:#3d3d3d;letter-spacing:0.15px;">Стратегическая…</div>
<div class="t" style="left:1304px;top:447.59px;font-size:15.6px;line-height:20px;height:20px;color:#3d3d3d;">Задолженность …</div>
<div class="t" style="left:1461px;top:447.53px;font-size:15.8px;line-height:20px;height:20px;color:#3d3d3d;letter-spacing:0.105px;width:367px;overflow:hidden;">Разработка внутрикорпоративной программы кр…</div>
<div class="a" style="left:731px;top:474px;width:1098px;height:32px;background:#f8f8f8"></div>
<div class="a" style="left:731px;top:506px;width:1098px;height:1px;background:#e4e4e4"></div>
<svg style="left:742px;top:484px" width="20" height="14" viewBox="0 0 20 14"><rect x="0.5" y="0.5" width="15" height="12" fill="#f5f7fb" stroke="#878d96" stroke-width="1"/><path d="M4 3.5H12M4 6.5H12M4 9.5H12" stroke="#878d96" stroke-width="1"/></svg>
<div class="t" style="left:771px;top:480.53px;font-size:15.8px;line-height:20px;height:20px;color:#3d3d3d;letter-spacing:0.1px;">24.05.2018 13:44:20</div>
<div class="t" style="left:1013px;top:480.53px;font-size:15.8px;line-height:20px;height:20px;color:#3d3d3d;letter-spacing:0.25px;">000000004</div>
<div class="t" style="left:1147px;top:480.59px;font-size:15.6px;line-height:20px;height:20px;color:#3d3d3d;letter-spacing:0.15px;">Стратегическая…</div>
<div class="t" style="left:1304px;top:480.59px;font-size:15.6px;line-height:20px;height:20px;color:#3d3d3d;">Повышение лоя…</div>
<div class="t" style="left:1461px;top:480.59px;font-size:15.6px;line-height:20px;height:20px;color:#3d3d3d;">Внедрение дисконтной системы</div>
<div class="a" style="left:731px;top:539px;width:1098px;height:1px;background:#e4e4e4"></div>
<svg style="left:742px;top:517px" width="20" height="14" viewBox="0 0 20 14"><rect x="0.5" y="0.5" width="15" height="12" fill="#f5f7fb" stroke="#878d96" stroke-width="1"/><path d="M4 3.5H12M4 6.5H12M4 9.5H12" stroke="#878d96" stroke-width="1"/></svg>
<div class="t" style="left:771px;top:513.53px;font-size:15.8px;line-height:20px;height:20px;color:#3d3d3d;letter-spacing:0.1px;">24.05.2018 13:44:20</div>
<div class="t" style="left:1013px;top:513.53px;font-size:15.8px;line-height:20px;height:20px;color:#3d3d3d;letter-spacing:0.25px;">000000005</div>
<div class="t" style="left:1147px;top:513.59px;font-size:15.6px;line-height:20px;height:20px;color:#3d3d3d;letter-spacing:0.15px;">Стратегическая…</div>
<div class="t" style="left:1304px;top:513.59px;font-size:15.6px;line-height:20px;height:20px;color:#3d3d3d;">Оборот более 2…</div>
<div class="t" style="left:1461px;top:513.59px;font-size:15.6px;line-height:20px;height:20px;color:#3d3d3d;">Экспансия на западный рынок</div>
<div class="a" style="left:731px;top:540px;width:1098px;height:32px;background:#f8f8f8"></div>
<div class="a" style="left:731px;top:572px;width:1098px;height:1px;background:#e4e4e4"></div>
<svg style="left:742px;top:550px" width="20" height="14" viewBox="0 0 20 14"><rect x="0.5" y="0.5" width="15" height="12" fill="#f5f7fb" stroke="#878d96" stroke-width="1"/><path d="M4 3.5H12M4 6.5H12M4 9.5H10" stroke="#878d96" stroke-width="1"/><path d="M9.6 9.9 L12.8 13.3 L18.3 6.9" fill="none" stroke="#1a8a26" stroke-width="3" stroke-linejoin="round" stroke-linecap="round"/><path d="M9.9 9.9 L12.8 12.9 L18 6.9" fill="none" stroke="#4fd04a" stroke-width="1.3" stroke-linecap="round"/></svg>
<div class="t" style="left:771px;top:546.53px;font-size:15.8px;line-height:20px;height:20px;color:#3d3d3d;letter-spacing:0.1px;">26.05.2018 16:56:47</div>
<div class="t" style="left:1013px;top:546.53px;font-size:15.8px;line-height:20px;height:20px;color:#3d3d3d;letter-spacing:0.25px;">000000006</div>
<div class="t" style="left:1147px;top:546.59px;font-size:15.6px;line-height:20px;height:20px;color:#3d3d3d;letter-spacing:0.15px;">Закупочная про…</div>
<div class="t" style="left:1304px;top:546.59px;font-size:15.6px;line-height:20px;height:20px;color:#3d3d3d;">Закупочная про…</div>
<div class="t" style="left:1461px;top:546.53px;font-size:15.8px;line-height:20px;height:20px;color:#3d3d3d;letter-spacing:-0.136px;width:367px;overflow:hidden;">Закупочная процедура для Закупка у единствен…</div>
<div class="a" style="left:731px;top:605px;width:1098px;height:1px;background:#e4e4e4"></div>
<svg style="left:742px;top:583px" width="20" height="14" viewBox="0 0 20 14"><rect x="0.5" y="0.5" width="15" height="12" fill="#f5f7fb" stroke="#878d96" stroke-width="1"/><path d="M4 3.5H12M4 6.5H12M4 9.5H10" stroke="#878d96" stroke-width="1"/><path d="M9.6 9.9 L12.8 13.3 L18.3 6.9" fill="none" stroke="#1a8a26" stroke-width="3" stroke-linejoin="round" stroke-linecap="round"/><path d="M9.9 9.9 L12.8 12.9 L18 6.9" fill="none" stroke="#4fd04a" stroke-width="1.3" stroke-linecap="round"/></svg>
<div class="t" style="left:771px;top:579.53px;font-size:15.8px;line-height:20px;height:20px;color:#3d3d3d;letter-spacing:0.1px;">26.05.2018 18:17:37</div>
<div class="t" style="left:1013px;top:579.53px;font-size:15.8px;line-height:20px;height:20px;color:#3d3d3d;letter-spacing:0.25px;">000000007</div>
<div class="t" style="left:1147px;top:579.59px;font-size:15.6px;line-height:20px;height:20px;color:#3d3d3d;letter-spacing:0.15px;">Закупочная про…</div>
<div class="t" style="left:1304px;top:579.59px;font-size:15.6px;line-height:20px;height:20px;color:#3d3d3d;">Закупочная про…</div>
<div class="t" style="left:1461px;top:579.59px;font-size:15.6px;line-height:20px;height:20px;color:#3d3d3d;">Закупочная процедура для Конкурс</div>
<div class="a" style="left:731px;top:606px;width:1098px;height:32px;background:#f8f8f8"></div>
<div class="a" style="left:731px;top:638px;width:1098px;height:1px;background:#e4e4e4"></div>
<svg style="left:742px;top:616px" width="20" height="14" viewBox="0 0 20 14"><rect x="0.5" y="0.5" width="15" height="12" fill="#f5f7fb" stroke="#878d96" stroke-width="1"/><path d="M4 3.5H12M4 6.5H12M4 9.5H10" stroke="#878d96" stroke-width="1"/><path d="M9.6 9.9 L12.8 13.3 L18.3 6.9" fill="none" stroke="#1a8a26" stroke-width="3" stroke-linejoin="round" stroke-linecap="round"/><path d="M9.9 9.9 L12.8 12.9 L18 6.9" fill="none" stroke="#4fd04a" stroke-width="1.3" stroke-linecap="round"/></svg>
<div class="t" style="left:771px;top:612.53px;font-size:15.8px;line-height:20px;height:20px;color:#3d3d3d;letter-spacing:0.1px;">13.06.2018 16:50:48</div>
<div class="t" style="left:1013px;top:612.53px;font-size:15.8px;line-height:20px;height:20px;color:#3d3d3d;letter-spacing:0.25px;">000000008</div>
<div class="t" style="left:1147px;top:612.59px;font-size:15.6px;line-height:20px;height:20px;color:#3d3d3d;letter-spacing:0.15px;">Закупочная про…</div>
<div class="t" style="left:1304px;top:612.59px;font-size:15.6px;line-height:20px;height:20px;color:#3d3d3d;">Закупочная про…</div>
<div class="t" style="left:1461px;top:612.59px;font-size:15.6px;line-height:20px;height:20px;color:#3d3d3d;">Закупочная процедура для Запрос котировок</div>
<div class="a" style="left:731px;top:671px;width:1098px;height:1px;background:#e4e4e4"></div>
<svg style="left:742px;top:649px" width="20" height="14" viewBox="0 0 20 14"><rect x="0.5" y="0.5" width="15" height="12" fill="#f5f7fb" stroke="#878d96" stroke-width="1"/><path d="M4 3.5H12M4 6.5H12M4 9.5H10" stroke="#878d96" stroke-width="1"/><path d="M9.6 9.9 L12.8 13.3 L18.3 6.9" fill="none" stroke="#1a8a26" stroke-width="3" stroke-linejoin="round" stroke-linecap="round"/><path d="M9.9 9.9 L12.8 12.9 L18 6.9" fill="none" stroke="#4fd04a" stroke-width="1.3" stroke-linecap="round"/></svg>
<div class="t" style="left:771px;top:645.53px;font-size:15.8px;line-height:20px;height:20px;color:#3d3d3d;letter-spacing:0.1px;">15.06.2018 18:38:42</div>
<div class="t" style="left:1013px;top:645.53px;font-size:15.8px;line-height:20px;height:20px;color:#3d3d3d;letter-spacing:0.25px;">000000009</div>
<div class="t" style="left:1147px;top:645.59px;font-size:15.6px;line-height:20px;height:20px;color:#3d3d3d;letter-spacing:0.15px;">Закупочная про…</div>
<div class="t" style="left:1304px;top:645.59px;font-size:15.6px;line-height:20px;height:20px;color:#3d3d3d;">Закупочная про…</div>
<div class="t" style="left:1461px;top:645.59px;font-size:15.6px;line-height:20px;height:20px;color:#3d3d3d;">Закупочная процедура для Запрос предложений</div>
<div class="a" style="left:731px;top:672px;width:1098px;height:32px;background:#f8f8f8"></div>
<div class="a" style="left:731px;top:704px;width:1098px;height:1px;background:#e4e4e4"></div>
<svg style="left:742px;top:682px" width="20" height="14" viewBox="0 0 20 14"><rect x="0.5" y="0.5" width="15" height="12" fill="#f5f7fb" stroke="#878d96" stroke-width="1"/><path d="M4 3.5H12M4 6.5H12M4 9.5H10" stroke="#878d96" stroke-width="1"/><path d="M9.6 9.9 L12.8 13.3 L18.3 6.9" fill="none" stroke="#1a8a26" stroke-width="3" stroke-linejoin="round" stroke-linecap="round"/><path d="M9.9 9.9 L12.8 12.9 L18 6.9" fill="none" stroke="#4fd04a" stroke-width="1.3" stroke-linecap="round"/></svg>
<div class="t" style="left:771px;top:678.53px;font-size:15.8px;line-height:20px;height:20px;color:#3d3d3d;letter-spacing:0.1px;">22.06.2018 19:17:46</div>
<div class="t" style="left:1013px;top:678.53px;font-size:15.8px;line-height:20px;height:20px;color:#3d3d3d;letter-spacing:0.25px;">000000010</div>
<div class="t" style="left:1147px;top:678.59px;font-size:15.6px;line-height:20px;height:20px;color:#3d3d3d;letter-spacing:0.15px;">Закупочная про…</div>
<div class="t" style="left:1304px;top:678.59px;font-size:15.6px;line-height:20px;height:20px;color:#3d3d3d;">Закупочная про…</div>
<div class="t" style="left:1461px;top:678.59px;font-size:15.6px;line-height:20px;height:20px;color:#3d3d3d;">Закупочная процедура для Запрос предложений</div>
<div class="a" style="left:731px;top:737px;width:1098px;height:1px;background:#e4e4e4"></div>
<svg style="left:742px;top:715px" width="20" height="14" viewBox="0 0 20 14"><rect x="0.5" y="0.5" width="15" height="12" fill="#f5f7fb" stroke="#878d96" stroke-width="1"/><path d="M4 3.5H12M4 6.5H12M4 9.5H10" stroke="#878d96" stroke-width="1"/><path d="M9.6 9.9 L12.8 13.3 L18.3 6.9" fill="none" stroke="#1a8a26" stroke-width="3" stroke-linejoin="round" stroke-linecap="round"/><path d="M9.9 9.9 L12.8 12.9 L18 6.9" fill="none" stroke="#4fd04a" stroke-width="1.3" stroke-linecap="round"/></svg>
<div class="t" style="left:771px;top:711.53px;font-size:15.8px;line-height:20px;height:20px;color:#3d3d3d;letter-spacing:0.1px;">25.06.2018 18:07:13</div>
<div class="t" style="left:1013px;top:711.53px;font-size:15.8px;line-height:20px;height:20px;color:#3d3d3d;letter-spacing:0.25px;">000000011</div>
<div class="t" style="left:1147px;top:711.59px;font-size:15.6px;line-height:20px;height:20px;color:#3d3d3d;letter-spacing:0.15px;">Закупочная про…</div>
<div class="t" style="left:1304px;top:711.59px;font-size:15.6px;line-height:20px;height:20px;color:#3d3d3d;">Закупочная про…</div>
<div class="t" style="left:1461px;top:711.59px;font-size:15.6px;line-height:20px;height:20px;color:#3d3d3d;">Закупочная процедура для Запрос котировок</div>
<div class="a" style="left:731px;top:738px;width:1098px;height:32px;background:#f8f8f8"></div>
<div class="a" style="left:731px;top:770px;width:1098px;height:1px;background:#e4e4e4"></div>
<svg style="left:742px;top:748px" width="20" height="14" viewBox="0 0 20 14"><rect x="0.5" y="0.5" width="15" height="12" fill="#f5f7fb" stroke="#878d96" stroke-width="1"/><path d="M4 3.5H12M4 6.5H12M4 9.5H10" stroke="#878d96" stroke-width="1"/><path d="M9.6 9.9 L12.8 13.3 L18.3 6.9" fill="none" stroke="#1a8a26" stroke-width="3" stroke-linejoin="round" stroke-linecap="round"/><path d="M9.9 9.9 L12.8 12.9 L18 6.9" fill="none" stroke="#4fd04a" stroke-width="1.3" stroke-linecap="round"/></svg>
<div class="t" style="left:771px;top:744.53px;font-size:15.8px;line-height:20px;height:20px;color:#3d3d3d;letter-spacing:0.1px;">27.06.2018 18:26:16</div>
<div class="t" style="left:1013px;top:744.53px;font-size:15.8px;line-height:20px;height:20px;color:#3d3d3d;letter-spacing:0.25px;">000000012</div>
<div class="t" style="left:1147px;top:744.59px;font-size:15.6px;line-height:20px;height:20px;color:#3d3d3d;letter-spacing:0.15px;">Закупочная про…</div>
<div class="t" style="left:1304px;top:744.59px;font-size:15.6px;line-height:20px;height:20px;color:#3d3d3d;">Закупочная про…</div>
<div class="t" style="left:1461px;top:744.59px;font-size:15.6px;line-height:20px;height:20px;color:#3d3d3d;">Закупочная процедура для Запрос предложений</div>
<div class="a" style="left:731px;top:803px;width:1098px;height:1px;background:#e4e4e4"></div>
<svg style="left:742px;top:781px" width="20" height="14" viewBox="0 0 20 14"><rect x="0.5" y="0.5" width="15" height="12" fill="#f5f7fb" stroke="#878d96" stroke-width="1"/><path d="M4 3.5H12M4 6.5H12M4 9.5H10" stroke="#878d96" stroke-width="1"/><path d="M9.6 9.9 L12.8 13.3 L18.3 6.9" fill="none" stroke="#1a8a26" stroke-width="3" stroke-linejoin="round" stroke-linecap="round"/><path d="M9.9 9.9 L12.8 12.9 L18 6.9" fill="none" stroke="#4fd04a" stroke-width="1.3" stroke-linecap="round"/></svg>
<div class="t" style="left:771px;top:777.53px;font-size:15.8px;line-height:20px;height:20px;color:#3d3d3d;letter-spacing:0.1px;">28.06.2018 15:06:17</div>
<div class="t" style="left:1013px;top:777.53px;font-size:15.8px;line-height:20px;height:20px;color:#3d3d3d;letter-spacing:0.25px;">000000013</div>
<div class="t" style="left:1147px;top:777.59px;font-size:15.6px;line-height:20px;height:20px;color:#3d3d3d;letter-spacing:0.15px;">Закупочная про…</div>
<div class="t" style="left:1304px;top:777.59px;font-size:15.6px;line-height:20px;height:20px;color:#3d3d3d;">Закупочная про…</div>
<div class="t" style="left:1461px;top:777.59px;font-size:15.6px;line-height:20px;height:20px;color:#3d3d3d;">Закупочная процедура для Запрос предложений</div>
<div class="a" style="left:731px;top:804px;width:1098px;height:32px;background:#fdf2c8"></div>
<div class="a" style="left:731px;top:804px;width:272px;height:32px;background:#fbe18a;border:3px solid #f2c535"></div>
<div class="a" style="left:1002px;top:804px;width:1px;height:32px;background:#f4e6b0"></div>
<div class="a" style="left:1136px;top:804px;width:1px;height:32px;background:#f4e6b0"></div>
<div class="a" style="left:1293px;top:804px;width:1px;height:32px;background:#f4e6b0"></div>
<div class="a" style="left:1450px;top:804px;width:1px;height:32px;background:#f4e6b0"></div>
<div class="a" style="left:731px;top:836px;width:1098px;height:1px;background:#e4e4e4"></div>
<svg style="left:742px;top:814px" width="20" height="14" viewBox="0 0 20 14"><rect x="0.5" y="0.5" width="15" height="12" fill="#f5f7fb" stroke="#878d96" stroke-width="1"/><path d="M4 3.5H12M4 6.5H12M4 9.5H10" stroke="#878d96" stroke-width="1"/><path d="M9.6 9.9 L12.8 13.3 L18.3 6.9" fill="none" stroke="#1a8a26" stroke-width="3" stroke-linejoin="round" stroke-linecap="round"/><path d="M9.9 9.9 L12.8 12.9 L18 6.9" fill="none" stroke="#4fd04a" stroke-width="1.3" stroke-linecap="round"/></svg>
<div class="t" style="left:771px;top:810.53px;font-size:15.8px;line-height:20px;height:20px;color:#3d3d3d;letter-spacing:0.1px;">17.07.2018 15:50:07</div>
<div class="t" style="left:1013px;top:810.53px;font-size:15.8px;line-height:20px;height:20px;color:#3d3d3d;letter-spacing:0.25px;">000000014</div>
<div class="t" style="left:1147px;top:810.59px;font-size:15.6px;line-height:20px;height:20px;color:#3d3d3d;letter-spacing:0.15px;">Закупочная про…</div>
<div class="t" style="left:1304px;top:810.59px;font-size:15.6px;line-height:20px;height:20px;color:#3d3d3d;">Закупочная про…</div>
<div class="t" style="left:1461px;top:810.59px;font-size:15.6px;line-height:20px;height:20px;color:#3d3d3d;">Закупочная процедура для Запрос котировок</div>
<div class="a" style="left:731px;top:869px;width:1098px;height:1px;background:#e4e4e4"></div>
<svg style="left:742px;top:847px" width="20" height="14" viewBox="0 0 20 14"><rect x="0.5" y="0.5" width="15" height="12" fill="#f5f7fb" stroke="#878d96" stroke-width="1"/><path d="M4 3.5H12M4 6.5H12M4 9.5H10" stroke="#878d96" stroke-width="1"/><path d="M9.6 9.9 L12.8 13.3 L18.3 6.9" fill="none" stroke="#1a8a26" stroke-width="3" stroke-linejoin="round" stroke-linecap="round"/><path d="M9.9 9.9 L12.8 12.9 L18 6.9" fill="none" stroke="#4fd04a" stroke-width="1.3" stroke-linecap="round"/></svg>
<div class="t" style="left:771px;top:843.53px;font-size:15.8px;line-height:20px;height:20px;color:#3d3d3d;letter-spacing:0.1px;">31.12.2019 12:00:00</div>
<div class="t" style="left:1013px;top:843.53px;font-size:15.8px;line-height:20px;height:20px;color:#3d3d3d;letter-spacing:0.25px;">000000016</div>
<div class="t" style="left:1147px;top:843.59px;font-size:15.6px;line-height:20px;height:20px;color:#3d3d3d;letter-spacing:0.15px;">Предупредитель…</div>
<div class="t" style="left:1304px;top:843.59px;font-size:15.6px;line-height:20px;height:20px;color:#3d3d3d;">Риск неполного …</div>
<div class="t" style="left:1461px;top:843.53px;font-size:15.8px;line-height:20px;height:20px;color:#3d3d3d;letter-spacing:-0.011px;width:367px;overflow:hidden;">Передача результатов инвентаризации активов …</div>
<div class="a" style="left:731px;top:870px;width:1098px;height:32px;background:#f8f8f8"></div>
<div class="a" style="left:731px;top:902px;width:1098px;height:1px;background:#e4e4e4"></div>
<svg style="left:742px;top:880px" width="20" height="14" viewBox="0 0 20 14"><rect x="0.5" y="0.5" width="15" height="12" fill="#f5f7fb" stroke="#878d96" stroke-width="1"/><path d="M4 3.5H12M4 6.5H12M4 9.5H10" stroke="#878d96" stroke-width="1"/><path d="M9.6 9.9 L12.8 13.3 L18.3 6.9" fill="none" stroke="#1a8a26" stroke-width="3" stroke-linejoin="round" stroke-linecap="round"/><path d="M9.9 9.9 L12.8 12.9 L18 6.9" fill="none" stroke="#4fd04a" stroke-width="1.3" stroke-linecap="round"/></svg>
<div class="t" style="left:771px;top:876.53px;font-size:15.8px;line-height:20px;height:20px;color:#3d3d3d;letter-spacing:0.1px;">11.03.2020 15:12:05</div>
<div class="t" style="left:1013px;top:876.53px;font-size:15.8px;line-height:20px;height:20px;color:#3d3d3d;letter-spacing:0.25px;">000000015</div>
<div class="t" style="left:1147px;top:876.59px;font-size:15.6px;line-height:20px;height:20px;color:#3d3d3d;letter-spacing:0.15px;">Предупредитель…</div>
<div class="t" style="left:1304px;top:876.59px;font-size:15.6px;line-height:20px;height:20px;color:#3d3d3d;">Риск неотражен…</div>
<div class="t" style="left:1461px;top:876.53px;font-size:15.8px;line-height:20px;height:20px;color:#3d3d3d;letter-spacing:0.027px;width:367px;overflow:hidden;">Доведение до персонала требований регламент…</div>
<svg style="left:741px;top:911px" width="6" height="8" viewBox="0 0 6 8"><path d="M5.5 0.5V7.5L0.5 4Z" fill="#b0b0b0"/></svg>
<div class="a" style="left:759px;top:910px;width:903px;height:10px;background:#d4d4d4;border-radius:5px"></div>
<div class="a" style="left:759px;top:910px;width:717px;height:10px;background:#9b9b9b;border-radius:5px"></div>
<svg style="left:1673px;top:912px" width="6" height="6" viewBox="0 0 6 6"><path d="M0.7 0.5V5.5L5.5 3Z" fill="#333"/></svg>
<div class="a" style="left:1709px;top:903px;width:60px;height:26px;background:linear-gradient(#f8f8f8,#ececec);border-left:1px solid #c6c6c6;border-top:1px solid #c6c6c6"></div>
<div class="a" style="left:1769px;top:903px;width:60px;height:26px;background:#fff;border-left:1px solid #c6c6c6;border-top:1px solid #c6c6c6"></div>
<div class="a" style="left:1739px;top:903px;width:1px;height:26px;background:#c6c6c6"></div>
<div class="a" style="left:1799px;top:903px;width:1px;height:26px;background:#c6c6c6"></div>
<svg style="left:1709px;top:903px" width="30" height="26" viewBox="0 0 30 26"><path d="M10 10.3H21" stroke="#333" stroke-width="1.3"/><path d="M15.5 10.6L22 17H9Z" fill="#333" stroke="#333" stroke-width="0.6" stroke-linejoin="round"/></svg>
<svg style="left:1739px;top:903px" width="30" height="26" viewBox="0 0 30 26"><path d="M15.4 10.6L21.9 17H8.9Z" fill="#333" stroke="#333" stroke-width="0.6" stroke-linejoin="round"/></svg>
<svg style="left:1769px;top:903px" width="30" height="26" viewBox="0 0 30 26"><path d="M9.2 11H21.6L15.4 17.5Z" fill="#b3b3b3"/></svg>
<svg style="left:1799px;top:903px" width="30" height="26" viewBox="0 0 30 26"><path d="M9 11H21.9L15.45 17.5Z" fill="#b3b3b3"/><path d="M10 17.7H21" stroke="#b3b3b3" stroke-width="1.4"/></svg>
</body></html>
